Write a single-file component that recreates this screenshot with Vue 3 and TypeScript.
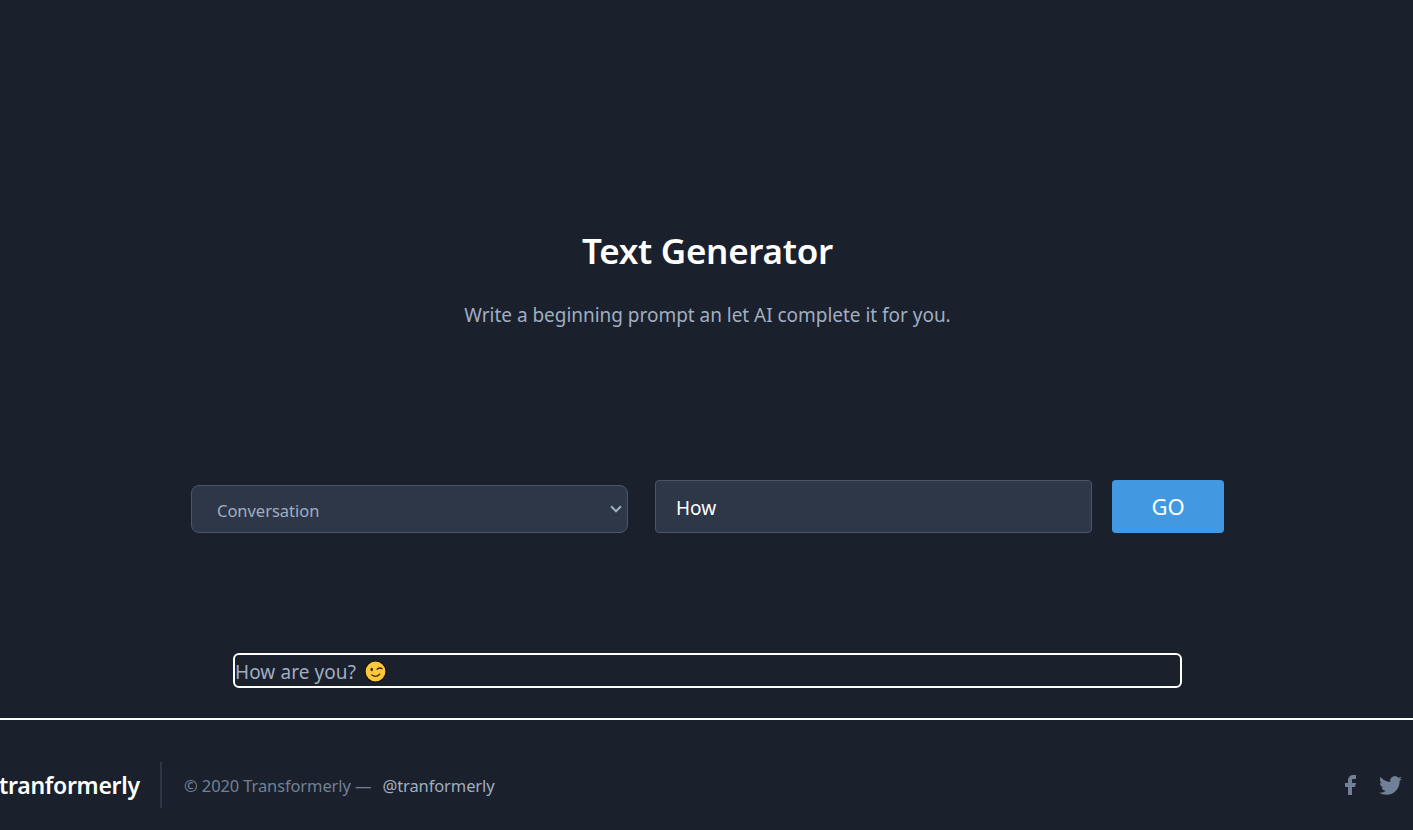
<script setup lang="ts">
import { ref } from 'vue'
const category = ref('Conversation')
const prompt = ref('How')
const categories: string[] = ['Conversation', 'Story', 'Poem']
</script>

<template>
  <div class="page">
    <main class="main">
      <header class="intro">
        <h1 class="title">Text Generator</h1>
        <p class="subtitle">Write a beginning prompt an let AI complete it for you.</p>
      </header>
      <form class="controls" @submit.prevent>
        <div class="select-wrap">
          <select v-model="category" class="select">
            <option v-for="c in categories" :key="c" :value="c">{{ c }}</option>
          </select>
          <svg class="chevron" viewBox="0 0 20 20" aria-hidden="true">
            <path fill="currentColor" d="M9.293 12.95l.707.707L15.657 8l-1.414-1.414L10 10.828 5.757 6.586 4.343 8z" />
          </svg>
        </div>
        <input v-model="prompt" class="input" type="text" />
        <button class="go" type="submit">GO</button>
      </form>
      <div class="result">
        <span class="result-text">How are you?</span>
        <svg class="emoji" viewBox="0 0 22 22" aria-hidden="true">
          <circle cx="11" cy="11" r="10" fill="#fcc73d" stroke="#1a1208" stroke-width="1" />
          <ellipse cx="7.4" cy="9" rx="1.2" ry="1.7" fill="#3a2a10" />
          <path d="M12.6 8.8q2.3-2 4.6-.5" fill="none" stroke="#3a2a10" stroke-width="1.3" stroke-linecap="round" />
          <path d="M7.5 14.4q4 2.8 7.5-.8" fill="none" stroke="#3a2a10" stroke-width="1.3" stroke-linecap="round" />
        </svg>
      </div>
    </main>
    <footer class="footer">
      <a class="brand">tranformerly</a>
      <p class="copy">© 2020 Transformerly — <a class="handle">@tranformerly</a></p>
      <div class="social">
        <svg class="fb" viewBox="0 0 24 24" aria-hidden="true">
          <path fill="currentColor" d="M18 2h-3a5 5 0 0 0-5 5v3H7v4h3v8h4v-8h3l1-4h-4V7a1 1 0 0 1 1-1h3z" />
        </svg>
        <svg class="tw" viewBox="0 0 24 24" aria-hidden="true">
          <path fill="currentColor" d="M23.953 4.57a10 10 0 0 1-2.825.775 4.958 4.958 0 0 0 2.163-2.723c-.951.555-2.005.959-3.127 1.184a4.92 4.92 0 0 0-8.384 4.482C7.69 8.095 4.067 6.13 1.64 3.162a4.822 4.822 0 0 0-.666 2.475c0 1.71.87 3.213 2.188 4.096a4.904 4.904 0 0 1-2.228-.616v.06a4.923 4.923 0 0 0 3.946 4.827 4.996 4.996 0 0 1-2.212.085 4.936 4.936 0 0 0 4.604 3.417 9.867 9.867 0 0 1-6.102 2.105c-.39 0-.779-.023-1.17-.067a13.995 13.995 0 0 0 7.557 2.209c9.053 0 13.998-7.496 13.998-13.985 0-.21 0-.42-.015-.63A9.935 9.935 0 0 0 24 4.59z" />
        </svg>
      </div>
    </footer>
  </div>
</template>

<style>
html, body { margin: 0; background: #1a202c; }
</style>

<style scoped>
.page {
  height: 830px;
  overflow: hidden;
  display: flex;
  flex-direction: column;
  background: #1a202c;
  color: #a0aec0;
  font-family: "Noto Sans", "Open Sans", sans-serif;
}
.main {
  flex: none;
  height: 718px;
  box-sizing: border-box;
  padding-top: 228px;
  display: flex;
  flex-direction: column;
  align-items: center;
}
.intro { text-align: center; margin-left: 2px; }
.title {
  margin: 0;
  color: #fff;
  font-size: 35px;
  line-height: 46px;
  font-weight: 600;
  letter-spacing: -0.28px;
}
.subtitle {
  margin: 27px 0 0;
  font-size: 19px;
  line-height: 28px;
  letter-spacing: -0.03px;
}
.controls {
  margin-top: 151px;
  margin-left: 2px;
  width: 1033px;
  display: flex;
  align-items: flex-end;
}
.select-wrap {
  position: relative;
  width: 437px;
  height: 48px;
  margin-right: 27px;
}
.select {
  appearance: none;
  width: 100%;
  height: 100%;
  box-sizing: border-box;
  padding: 2px 32px 0 25px;
  background: #2d3748;
  border: 1px solid #4a5568;
  border-radius: 8px;
  color: #a0aec0;
  font: 400 16.5px "Noto Sans", sans-serif;
  letter-spacing: -0.03px;
  outline: none;
}
.chevron {
  position: absolute;
  right: 2px;
  top: 14px;
  width: 20px;
  height: 20px;
  color: #a0aec0;
  pointer-events: none;
}
.input {
  width: 437px;
  height: 53px;
  margin-right: 20px;
  box-sizing: border-box;
  padding: 2px 21px 0 20px;
  background: #2d3748;
  border: 1px solid #4a5568;
  border-radius: 4px;
  color: #fff;
  font: 400 19px "Noto Sans", sans-serif;
  outline: none;
}
.go {
  width: 112px;
  height: 53px;
  padding: 0 0 2px;
  background: #4299e1;
  border: 0;
  border-radius: 4px;
  color: #fff;
  font: 400 22px "Noto Sans", sans-serif;
}
.result {
  margin-top: 120px;
  margin-left: 2px;
  width: 949px;
  height: 35px;
  box-sizing: border-box;
  border: 2px solid #fff;
  border-radius: 6px;
  display: flex;
  align-items: center;
  font-size: 19px;
  line-height: 31px;
}
.result-text { padding-top: 4px; letter-spacing: 0.08px; }
.emoji {
  width: 23px;
  height: 23px;
  margin-left: 8px;
  margin-top: 1px;
}
.footer {
  flex: 1;
  border-top: 2px solid #fff;
  display: flex;
  align-items: center;
}
.brand {
  width: 160px;
  height: 46px;
  line-height: 46px;
  border-right: 2px solid #2d3748;
  color: #fff;
  font-size: 23px;
  font-weight: 600;
  letter-spacing: -0.3px;
  margin-top: 20px;
  text-indent: -1px;
}
.copy {
  margin: 20px 0 0 22px;
  color: #718096;
  font-size: 16.5px;
  letter-spacing: -0.11px;
}
.handle {
  color: #a0aec0;
  margin-left: 7px;
}
.social {
  margin: 20px 11px 0 auto;
  display: flex;
  align-items: center;
  color: #718096;
}
.fb { width: 24px; height: 24px; }
.tw { width: 23px; height: 23px; margin-left: 17px; }
</style>
